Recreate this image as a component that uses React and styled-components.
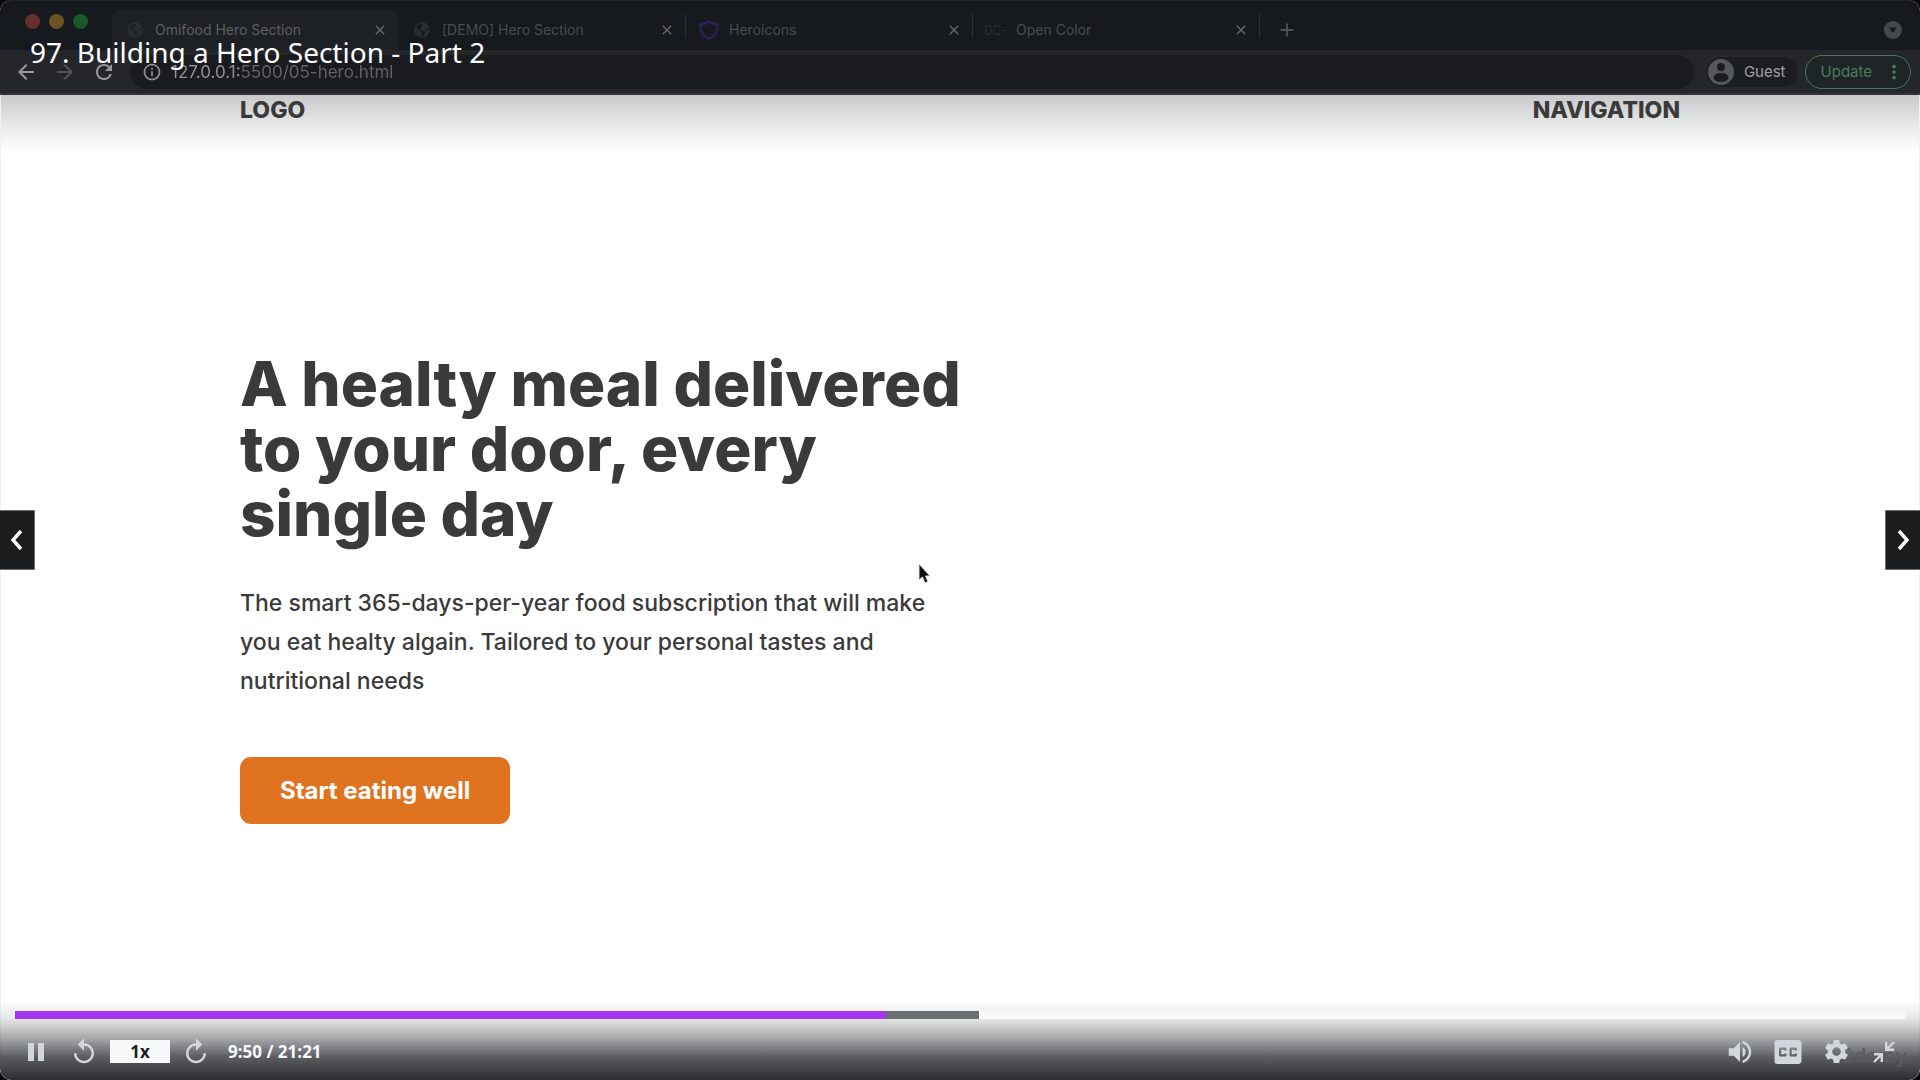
import React, { useState } from "react";
import styled, { createGlobalStyle } from "styled-components";
import {
  MdArrowBack, MdArrowForward, MdRefresh, MdInfoOutline, MdClose, MdAdd, MdMoreVert,
  MdReplay, MdVolumeUp, MdClosedCaption, MdSettings,
} from "react-icons/md";
import { FaGlobeAmericas } from "react-icons/fa";

const GlobalStyle = createGlobalStyle`
  * { box-sizing: border-box; }
  body { margin: 0; background: #08090b; }
  button, input { font: inherit; margin: 0; }
  button { border: 0; padding: 0; background: none; color: inherit; cursor: pointer; }
  h1, h2, p { margin: 0; }
  svg { flex-shrink: 0; }
`;

const Player = styled.main`
  position: relative;
  display: flex;
  flex-direction: column;
  min-height: 100vh;
  overflow: hidden;
  border-radius: 12px;
  background: #fff;
  font-family: Inter, "Liberation Sans", sans-serif;
`;

const TabStrip = styled.div`
  display: flex;
  align-items: center;
  height: 50px;
  padding: 0 18px 0 25px;
  background: #16191d;
  border-top: 1px solid #202226;
`;

const WindowButtons = styled.div`
  display: flex;
  gap: 9px;
  width: 87px;
  padding-bottom: 8px;
`;

const Light = styled.button`
  width: 15px;
  height: 15px;
  border-radius: 50%;
  background: ${(p) => p.$color};
`;

const Tab = styled.div`
  display: flex;
  align-items: center;
  align-self: flex-end;
  flex: 0 1 287px;
  min-width: 0;
  height: 40px;
  padding: 0 11px 0 13px;
  border-radius: 8px 8px 0 0;
  background: ${(p) => (p.$active ? "#1d2025" : "transparent")};
  color: ${(p) => (p.$active ? "#5d5f62" : "#494c50")};
`;

const TabLabel = styled.button`
  display: flex;
  align-items: center;
  gap: 10px;
  flex: 1;
  min-width: 0;
  font-size: 14px;
  line-height: 20px;
  text-align: left;
  white-space: nowrap;
`;

const Favicon = styled.span`
  display: flex;
  align-items: center;
  justify-content: center;
  width: 20px;
  height: 20px;
  color: #2a2d32;
  font-size: 13px;
`;

const IconButton = styled.button`
  display: flex;
  align-items: center;
  justify-content: center;
  color: ${(p) => p.$color || "#68696c"};
`;

const Divider = styled.span`
  width: 1px;
  height: 24px;
  margin-left: -1px;
  background: #2a2d31;
`;

const TabActions = styled.div`
  display: flex;
  align-items: center;
  justify-content: space-between;
  flex: 1;
  align-self: flex-end;
  height: 40px;
  padding-left: 16px;
`;

const Spacer = styled.span`
  flex: 1;
`;

const Toolbar = styled.div`
  display: flex;
  align-items: center;
  height: 45px;
  padding: 0 9px 0 14px;
  background: #24262a;
  border-bottom: 2px solid #353136;
`;

const HistoryButtons = styled.div`
  display: flex;
  gap: 15px;
  width: 116px;
`;

const AddressBar = styled.label`
  display: flex;
  align-items: center;
  gap: 9px;
  flex: 1;
  height: 34px;
  padding: 0 12px;
  border-radius: 17px;
  background: #1a1b1e;
  color: #929395;
`;

const AddressInput = styled.input`
  flex: 1;
  border: 0;
  padding: 0;
  outline: 0;
  color: transparent;
  background: linear-gradient(90deg, #929395 69px, #626366 69px);
  background-clip: text;
  font-size: 17px;
  line-height: 24px;
`;

const Guest = styled.button`
  display: flex;
  align-items: center;
  gap: 10px;
  height: 32px;
  margin-left: 11px;
  padding: 0 12px 0 2px;
  border: 1px solid #27282c;
  border-radius: 16px;
  background: #1c1d20;
  color: #a0a1a3;
  font-size: 15px;
`;

const Update = styled.button`
  display: flex;
  align-items: center;
  gap: 11px;
  height: 34px;
  margin-left: 6px;
  padding: 0 5px 0 15px;
  border: 1px solid #457857;
  border-radius: 17px;
  background: #1f2426;
  color: #4a7d5b;
  font-size: 15px;
`;

const Page = styled.div`
  flex: 1;
  padding: 0 12.5%;
  box-shadow: inset 1px 0 #f1f1f2, inset -1px 0 #f1f1f2;
  color: #3a3a3a;
  background: linear-gradient(#c9c9cb, #e1e2e2 24px, #f5f5f5 44px, #fff 60px);
`;

const PageHeader = styled.header`
  display: flex;
  justify-content: space-between;
  font-size: 23px;
  font-weight: 800;
  line-height: 30px;
`;

const Hero = styled.section`
  width: 740px;
  max-width: 100%;
  padding-top: 226px;
`;

const Heading = styled.h1`
  font-size: 62px;
  font-weight: 800;
  line-height: 65px;
`;

const Lead = styled.p`
  padding: 38px 0 56px;
  font-size: 23px;
  font-weight: 500;
  line-height: 39px;
`;

const Cta = styled.a`
  display: inline-block;
  padding: 0 40px;
  border-radius: 11px;
  background: #e0731f;
  color: #fff;
  font-size: 24px;
  font-weight: 700;
  line-height: 67px;
  text-decoration: none;
`;

const LectureTitle = styled.h2`
  position: absolute;
  top: 33px;
  left: 30px;
  color: #fff;
  font-family: "Noto Sans", "Open Sans", sans-serif;
  font-size: 28px;
  font-weight: 400;
  line-height: 38px;
`;

const LectureNav = styled.button`
  position: absolute;
  top: 510px;
  ${(p) => p.$side}: -1px;
  display: flex;
  align-items: center;
  justify-content: center;
  width: 36px;
  height: 60px;
  border: 1px solid #6a6f73;
  background: #1c1d1f;
`;

const Pointer = styled.svg`
  position: absolute;
  top: 563px;
  left: 917px;
`;

const ControlOverlay = styled.div`
  position: absolute;
  right: 0;
  bottom: 0;
  left: 0;
  padding: 10px 15px 0;
  background: linear-gradient(rgba(45, 47, 49, 0), rgba(45, 47, 52, 0.12) 18px, rgba(45, 47, 52, 0.4) 36px, rgba(45, 47, 52, 0.78) 56px, #2d2e33);
`;

const Progress = styled.input`
  appearance: none;
  display: block;
  width: 100%;
  height: 8px;
  outline: 0;
  &::-webkit-slider-thumb { appearance: none; width: 0; height: 8px; }
`;

const Controls = styled.div`
  position: relative;
  isolation: isolate;
  display: flex;
  align-items: center;
  gap: 16px;
  height: 61px;
  padding: 4px 5px 0;
  color: #d1d7dc;
`;

const ControlButton = styled.button`
  display: flex;
  align-items: center;
  justify-content: center;
  width: 32px;
  height: 32px;
`;

const RateGroup = styled.div`
  display: flex;
  align-items: center;
  gap: 10px;
`;

const Rate = styled.button`
  width: 60px;
  height: 23px;
  background: #f7f9fa;
  color: #1c1d1f;
  font-family: "Open Sans", "Noto Sans", sans-serif;
  font-size: 17px;
  font-weight: 700;
  line-height: 23px;
`;

const Time = styled.span`
  color: #f7f9fa;
  font-family: "Open Sans", "Noto Sans", sans-serif;
  font-size: 17px;
  font-weight: 700;
  line-height: 24px;
`;

const Watermark = styled.span`
  position: absolute;
  z-index: -1;
  right: -2px;
  bottom: 10px;
  color: #5b5c60;
  font-size: 20px;
  font-weight: 500;
  line-height: 28px;
`;

const Shield = () => (
  <svg width="20" height="20" viewBox="0 0 20 20" fill="none" stroke="#302058" strokeWidth="2.4" aria-hidden="true">
    <path d="M10 1.5C7.8 3.3 5.1 4.2 1.5 4.3C0.8 10.5 3.4 16 10 18.5C16.600 16 19.200 10.500 18.500 4.300C14.900 4.200 12.200 3.300 10 1.500Z" />
  </svg>
);

const Avatar = () => (
  <svg width="26" height="26" viewBox="0 0 26 26" aria-hidden="true">
    <circle cx="13" cy="13" r="13" fill="#55585c" />
    <circle cx="13" cy="8" r="4" fill="#1c1d20" />
    <ellipse cx="13" cy="18.500" rx="7.500" ry="4.500" fill="#1c1d20" />
  </svg>
);

const Mirrored = styled(MdReplay)`
  transform: scaleX(-1);
`;

const Chevron = ({ d }) => (
  <svg width="14" height="22" viewBox="0 0 14 22" fill="none" stroke="#fff" strokeWidth="3.4" aria-hidden="true">
    <path d={d} />
  </svg>
);

const TABS = [
  { title: "Omifood Hero Section", icon: <FaGlobeAmericas size={16} />, active: true },
  { title: "[DEMO] Hero Section", icon: <FaGlobeAmericas size={16} />, divided: true },
  { title: "Heroicons", icon: <Shield />, divided: true },
  { title: "Open Color", icon: "0C-", divided: true },
];

export default function App() {
  const [position, setPosition] = useState(461);
  const played = (position / 1000) * 100;
  const buffered = Math.max(played, 51);

  return (
    <>
      <GlobalStyle />
      <Player>
        <TabStrip>
          <WindowButtons>
            <Light $color="#692f30" aria-label="Close window" />
            <Light $color="#6b5423" aria-label="Minimize window" />
            <Light $color="#1a5929" aria-label="Zoom window" />
          </WindowButtons>
          {TABS.map((tab) => (
            <React.Fragment key={tab.title}>
              <Tab $active={tab.active}>
                <TabLabel>
                  <Favicon>{tab.icon}</Favicon>
                  {tab.title}
                </TabLabel>
                <IconButton aria-label={`Close ${tab.title}`}><MdClose size={16} /></IconButton>
              </Tab>
              {tab.divided && <Divider />}
            </React.Fragment>
          ))}
          <TabActions>
            <IconButton $color="#505255" aria-label="New tab"><MdAdd size={22} /></IconButton>
            <IconButton aria-label="Search tabs">
              <svg width="18" height="18" viewBox="0 0 18 18" aria-hidden="true">
                <circle cx="9" cy="9" r="9" fill="#45484c" />
                <path d="M5 6.500H13L9 12Z" fill="#16191d" />
              </svg>
            </IconButton>
          </TabActions>
        </TabStrip>
        <Toolbar>
          <HistoryButtons>
            <IconButton $color="#98999b" aria-label="Back"><MdArrowBack size={24} /></IconButton>
            <IconButton $color="#505255" aria-label="Forward"><MdArrowForward size={24} /></IconButton>
            <IconButton $color="#98999b" aria-label="Reload"><MdRefresh size={24} /></IconButton>
          </HistoryButtons>
          <AddressBar>
            <MdInfoOutline size={20} />
            <AddressInput aria-label="Address" defaultValue="127.0.0.1:5500/05-hero.html" />
          </AddressBar>
          <Guest><Avatar />Guest</Guest>
          <Update>Update<MdMoreVert size={22} /></Update>
        </Toolbar>
        <Page>
          <PageHeader>
            <span>LOGO</span>
            <nav>NAVIGATION</nav>
          </PageHeader>
          <Hero>
            <Heading>A healty meal delivered<br />to your door, every<br />single day</Heading>
            <Lead>
              The smart 365-days-per-year food subscription that will make<br />
              you eat healty algain. Tailored to your personal tastes and<br />
              nutritional needs
            </Lead>
            <Cta href="#">Start eating well</Cta>
          </Hero>
        </Page>

        <LectureTitle>97. Building a Hero Section - Part 2</LectureTitle>
        <LectureNav $side="left" aria-label="Previous lecture"><Chevron d="M11 2L3 11L11 20" /></LectureNav>
        <LectureNav $side="right" aria-label="Next lecture"><Chevron d="M3 2L11 11L3 20" /></LectureNav>
        <Pointer width="16" height="22" viewBox="0 0 16 22" aria-hidden="true">
          <path d="M2 1V17L5.500 14L8 20L11 18.500L8.500 13H13Z" fill="#111" stroke="#ddd" />
        </Pointer>

        <ControlOverlay>
          <Progress
            type="range"
            min="0"
            max="1000"
            aria-label="Video progress"
            value={position}
            onChange={(e) => setPosition(Number(e.target.value))}
            style={{ background: `linear-gradient(90deg, #a435f0 ${played}%, #6a6f73 ${played}% ${buffered}%, #f7f9fa ${buffered}%)` }}
          />
          <Controls>
            <Watermark>ûdemy</Watermark>
            <ControlButton aria-label="Pause">
              <svg width="16" height="18" viewBox="0 0 16 18" fill="currentColor" aria-hidden="true">
                <path d="M0 0H6V18H0ZM10 0H16V18H10Z" />
              </svg>
            </ControlButton>
            <RateGroup>
              <ControlButton aria-label="Rewind"><MdReplay size={30} /></ControlButton>
              <Rate>1x</Rate>
              <ControlButton aria-label="Forward"><Mirrored size={30} /></ControlButton>
            </RateGroup>
            <Time>9:50 / 21:21</Time>
            <Spacer />
            <ControlButton aria-label="Volume"><MdVolumeUp size={30} /></ControlButton>
            <ControlButton aria-label="Captions"><MdClosedCaption size={36} /></ControlButton>
            <ControlButton aria-label="Settings"><MdSettings size={29} /></ControlButton>
            <ControlButton aria-label="Exit fullscreen">
              <svg width="22" height="22" viewBox="0 0 22 22" fill="none" stroke="currentColor" strokeWidth="2.4" aria-hidden="true">
                <path d="M13.200 1V8.800H21M13.500 8.500L21 1M1 13.200H8.800V21M8.500 13.500L1 21" />
              </svg>
            </ControlButton>
          </Controls>
        </ControlOverlay>
      </Player>
    </>
  );
}
